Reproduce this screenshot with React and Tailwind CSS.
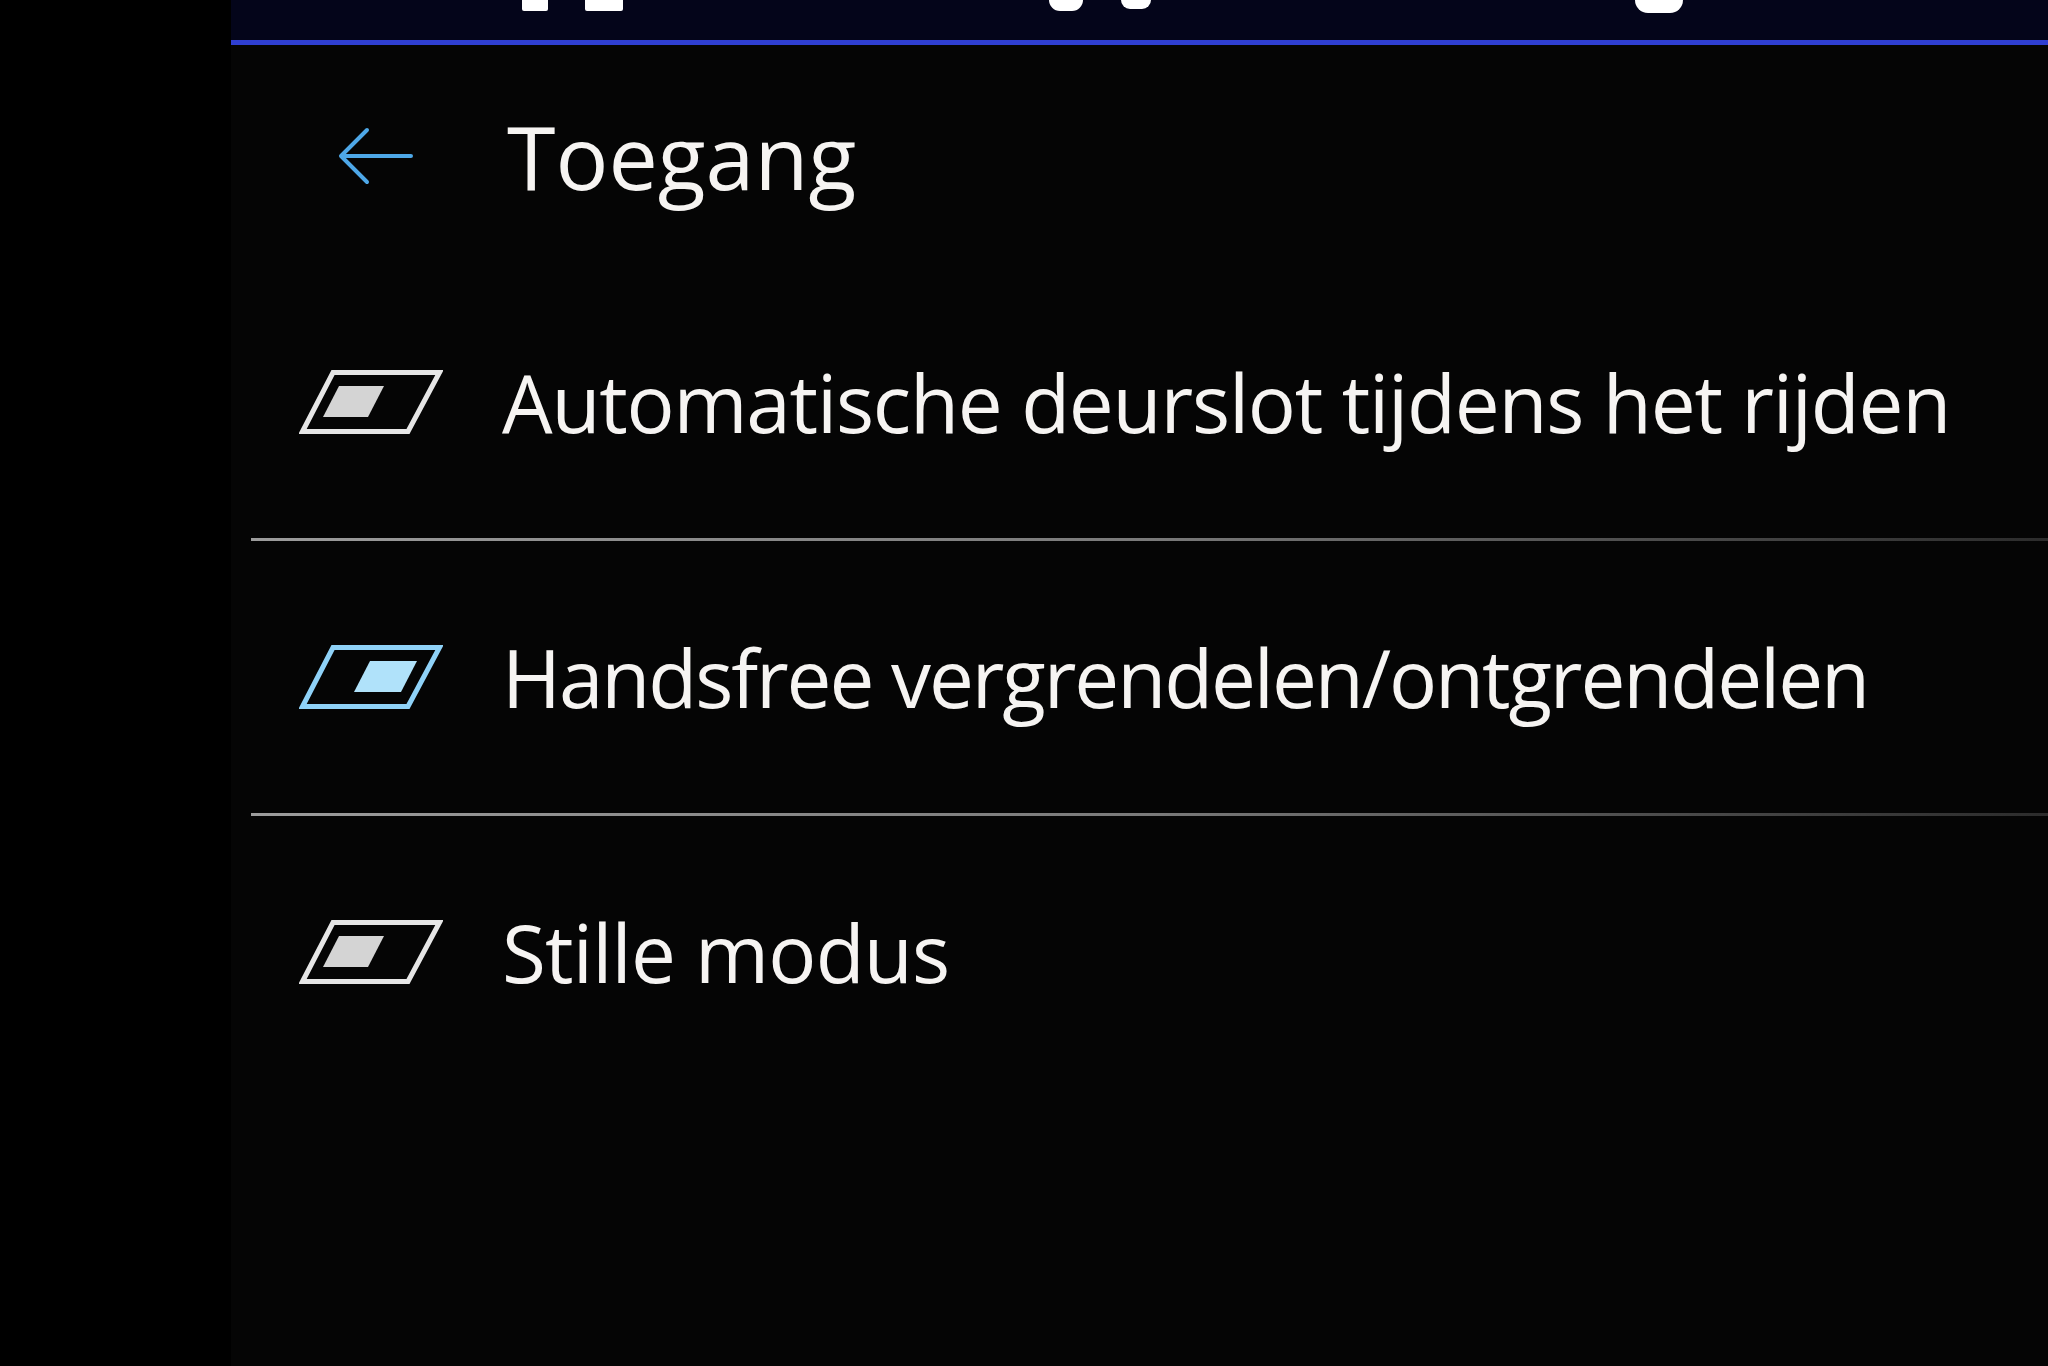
import React from 'react';

const ITEMS = [
  { label: 'Automatische deurslot tijdens het rijden', on: false, tracking: 'tracking-[-0.015em]' },
  { label: 'Handsfree vergrendelen/ontgrendelen', on: true, tracking: 'tracking-[-0.026em]' },
  { label: 'Stille modus', on: false, tracking: 'tracking-[-0.01em]' },
];

function Checkbox({ on }) {
  const stroke = on ? '#8fd2f8' : '#e6e6e6';
  const fill = on ? '#b0e2fa' : '#d4d4d4';
  return (
    <svg width="144" height="64" viewBox="0 0 144 64" className="shrink-0">
      <path d="M34 2.5 H140.5 L109 61.5 H3.5 Z" fill="none" stroke={stroke} strokeWidth="5" strokeLinejoin="miter" />
      {on ? (
        <path d="M71 16 H118 L102 47 H55 Z" fill={fill} />
      ) : (
        <path d="M40 16 H85 L69 47 H24 Z" fill={fill} />
      )}
    </svg>
  );
}

function BackArrow() {
  return (
    <svg width="76" height="58" viewBox="0 0 76 58" className="shrink-0">
      <path d="M74 29 H5 M30 3 L4 29 L30 55" fill="none" stroke="#4ea8e8" strokeWidth="4" strokeLinecap="round" strokeLinejoin="round" />
    </svg>
  );
}

function Divider() {
  return <div className="ml-[20px] h-[3px] bg-linear-to-r from-[#9c9c9c] via-[#7a7a7a] to-[#2c2c2c]" />;
}

export default function App() {
  return (
    <div className="flex h-[1366px] w-[2048px] overflow-hidden bg-black text-[#f6f4f2]" style={{ fontFamily: '"Open Sans", "Noto Sans", sans-serif' }}>
      {/* bezel */}
      <div className="w-[231px] shrink-0 bg-black" />

      <div className="flex flex-1 flex-col bg-[#050505]">
        {/* status bar (cut off at the top) */}
        <div className="relative h-[40px] bg-[#04051a]">
          <div className="absolute left-[291px] top-0 h-[11px] w-[26px] rounded-b-[2px] bg-white" />
          <div className="absolute left-[354px] top-0 h-[11px] w-[38px] rounded-b-[2px] bg-white" />
          <div className="absolute left-[818px] top-0 h-[11px] w-[34px] rounded-b-full bg-white" />
          <div className="absolute left-[890px] top-0 h-[9px] w-[30px] rounded-b-full bg-white" />
          <div className="absolute left-[1404px] top-0 h-[13px] w-[48px] rounded-b-full bg-white" />
        </div>
        <div className="h-[5px] bg-[#2f3fd2]" />

        {/* header */}
        <div className="flex h-[221px] items-center pl-[106px]">
          <BackArrow />
          <h1 className="ml-[94px] text-[88px] leading-none font-medium">Toegang</h1>
        </div>

        {/* list */}
        {ITEMS.map((item, i) => (
          <React.Fragment key={item.label}>
            {i > 0 && <Divider />}
            <div className="flex h-[272px] items-center gap-[59px] pl-[68px]">
              <Checkbox on={item.on} />
              <span className={`text-[80px] leading-none font-medium whitespace-nowrap ${item.tracking}`}>{item.label}</span>
            </div>
          </React.Fragment>
        ))}
      </div>
    </div>
  );
}
